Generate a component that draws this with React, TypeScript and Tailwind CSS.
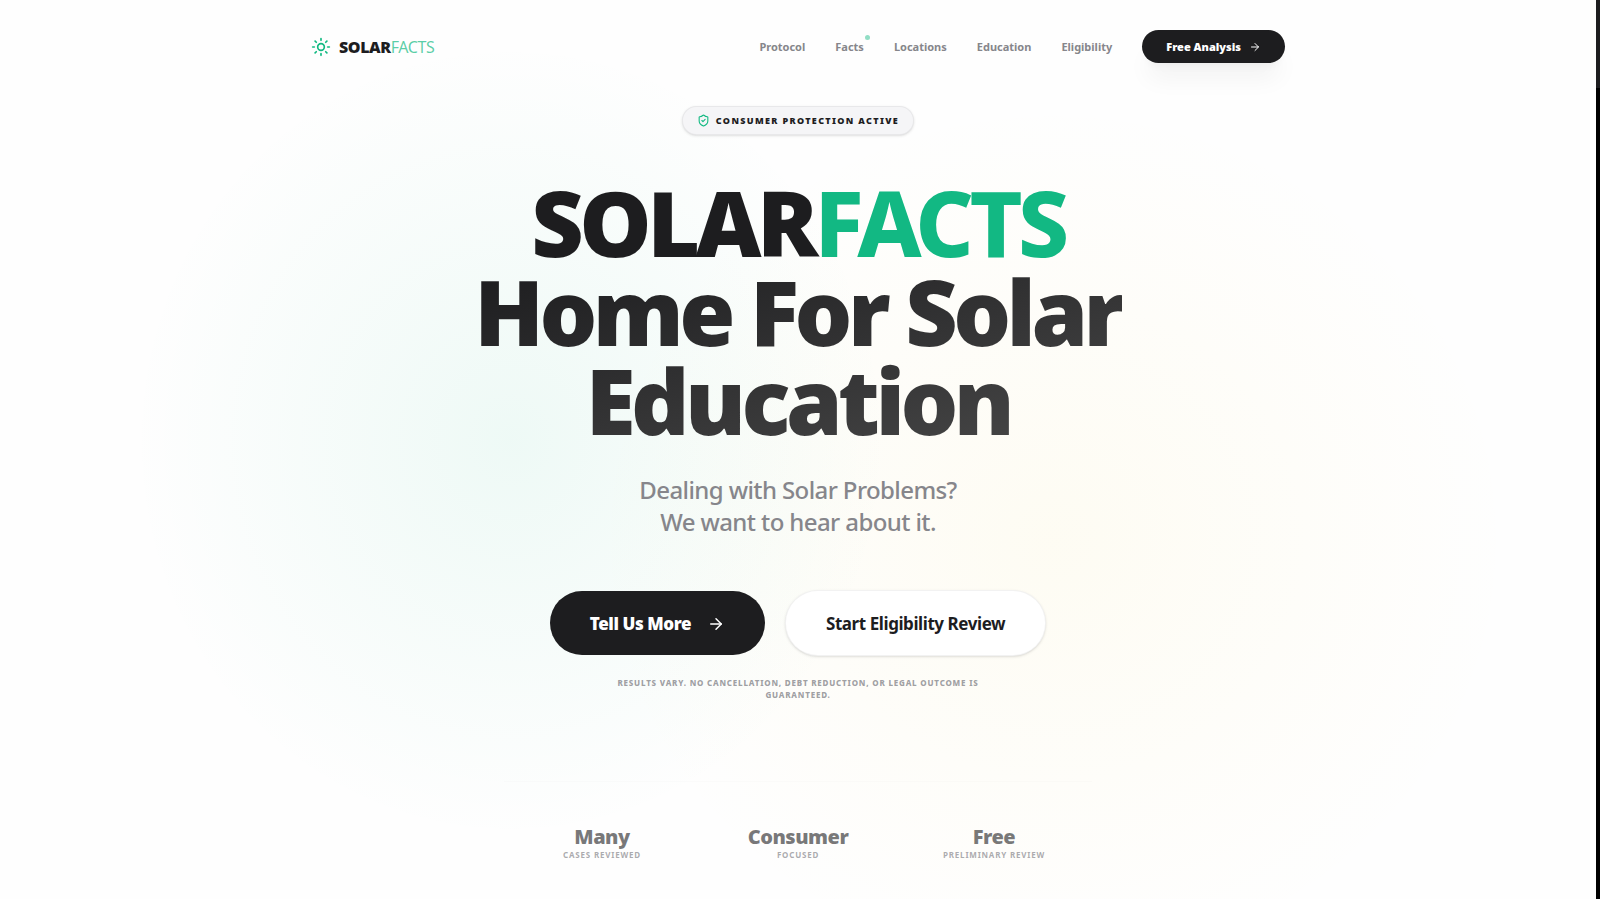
import { ArrowRight, ShieldCheck, Sun } from "lucide-react";

const links = ["Protocol", "Facts", "Locations", "Education", "Eligibility"];

const stats = [
  { value: "Many", label: "Cases Reviewed" },
  { value: "Consumer", label: "Focused" },
  { value: "Free", label: "Preliminary Review" },
];

function Header() {
  return (
    <header className="mx-auto flex w-full max-w-[1022px] items-center justify-between px-6 pt-[30px]">
      <a href="#home" className="flex items-center gap-2 text-base tracking-tight">
        <Sun className="size-5 text-[#10b981]" strokeWidth={2} />
        <span className="font-black text-[#1d1d1f]">
          SOLAR<span className="font-normal text-[#10b981]/70">FACTS</span>
        </span>
      </a>
      <div className="flex items-center gap-[30px]">
        <nav className="flex items-center gap-[30px] pt-px text-[11px] font-bold text-[#86868b]">
          {links.map((link) => (
            <a key={link} href={`#${link.toLowerCase()}`} className="relative">
              {link}
              {link === "Facts" && (
                <span className="absolute -top-1 -right-[6px] size-[5px] rounded-full bg-[#10b981]/45" />
              )}
            </a>
          ))}
        </nav>
        <button className="flex h-[33px] items-center gap-2 rounded-full bg-[#1d1d1f] px-6 pt-px text-[11px] font-black text-white shadow-xl shadow-black/5">
          Free Analysis
          <ArrowRight className="size-3" />
        </button>
      </div>
    </header>
  );
}

function Hero() {
  return (
    <section className="mx-auto flex w-full max-w-[720px] flex-col items-center text-center">
      <div className="mt-[43px] flex h-[29px] items-center gap-1.5 rounded-full border border-black/5 bg-[#f5f5f7] px-[14px] text-[9px] font-black tracking-[0.15em] text-[#1d1d1f] uppercase shadow-sm">
        <ShieldCheck className="size-[13px] text-[#10b981]" />
        Consumer Protection Active
      </div>
      <h1 className="mt-[43px] text-[91px] leading-[89px] font-black tracking-tighter text-[#1d1d1f]">
        <span className="block">
          SOLAR<span className="font-extrabold text-[#12b883]">FACTS</span>
        </span>
        <span className="block bg-linear-to-br from-[#1d1d1f] to-[#484848] bg-clip-text text-transparent">
          Home For Solar
          <br />
          Education
        </span>
      </h1>
      <p className="mt-[29px] text-2xl leading-8 font-medium tracking-tight text-[#86868b]">
        Dealing with Solar Problems?
        <br />
        We want to hear about it.
      </p>
      <div className="mt-[52px] flex items-center gap-5">
        <button className="flex h-16 items-center gap-4 rounded-full bg-[#1d1d1f] px-10 pt-px text-[17px] font-black tracking-tight text-white">
          Tell Us More
          <ArrowRight className="size-[18px]" />
        </button>
        <button className="h-[66px] rounded-full border border-black/5 bg-white px-10 pt-px text-[17px] font-bold tracking-tight text-[#1d1d1f] shadow-sm">
          Start Eligibility Review
        </button>
      </div>
      <p className="mt-[21px] max-w-[400px] text-[8px] leading-3 font-extrabold tracking-widest text-[#86868b]/80 uppercase">
        Results vary. No cancellation, debt reduction, or legal outcome is guaranteed.
      </p>
    </section>
  );
}

function Stats() {
  return (
    <section className="mx-auto mt-20 grid w-full max-w-[588px] grid-cols-3 border-t border-black/[0.01] pt-[41px] text-center">
      {stats.map(({ value, label }) => (
        <div key={value}>
          <p className="text-xl leading-7 font-black tracking-tight text-[#1d1d1f]/60">{value}</p>
          <p className="text-[8px] leading-2 font-bold tracking-widest text-[#86868b]/70 uppercase">{label}</p>
        </div>
      ))}
    </section>
  );
}

export default function App() {
  return (
    <div className="flex min-h-screen font-['Noto_Sans',sans-serif]">
      <div className="flex-1 bg-[#fefefe] bg-[radial-gradient(ellipse_380px_400px_at_32%_49%,rgb(16_185_129/0.065),transparent),radial-gradient(ellipse_460px_440px_at_66%_60%,rgb(251_211_36/0.05),transparent)] pb-9">
        <Header />
        <main>
          <Hero />
          <Stats />
        </main>
      </div>
      <div className="w-1 bg-black">
        <div className="h-[88px] bg-[#1d1d1f]" />
      </div>
    </div>
  );
}
